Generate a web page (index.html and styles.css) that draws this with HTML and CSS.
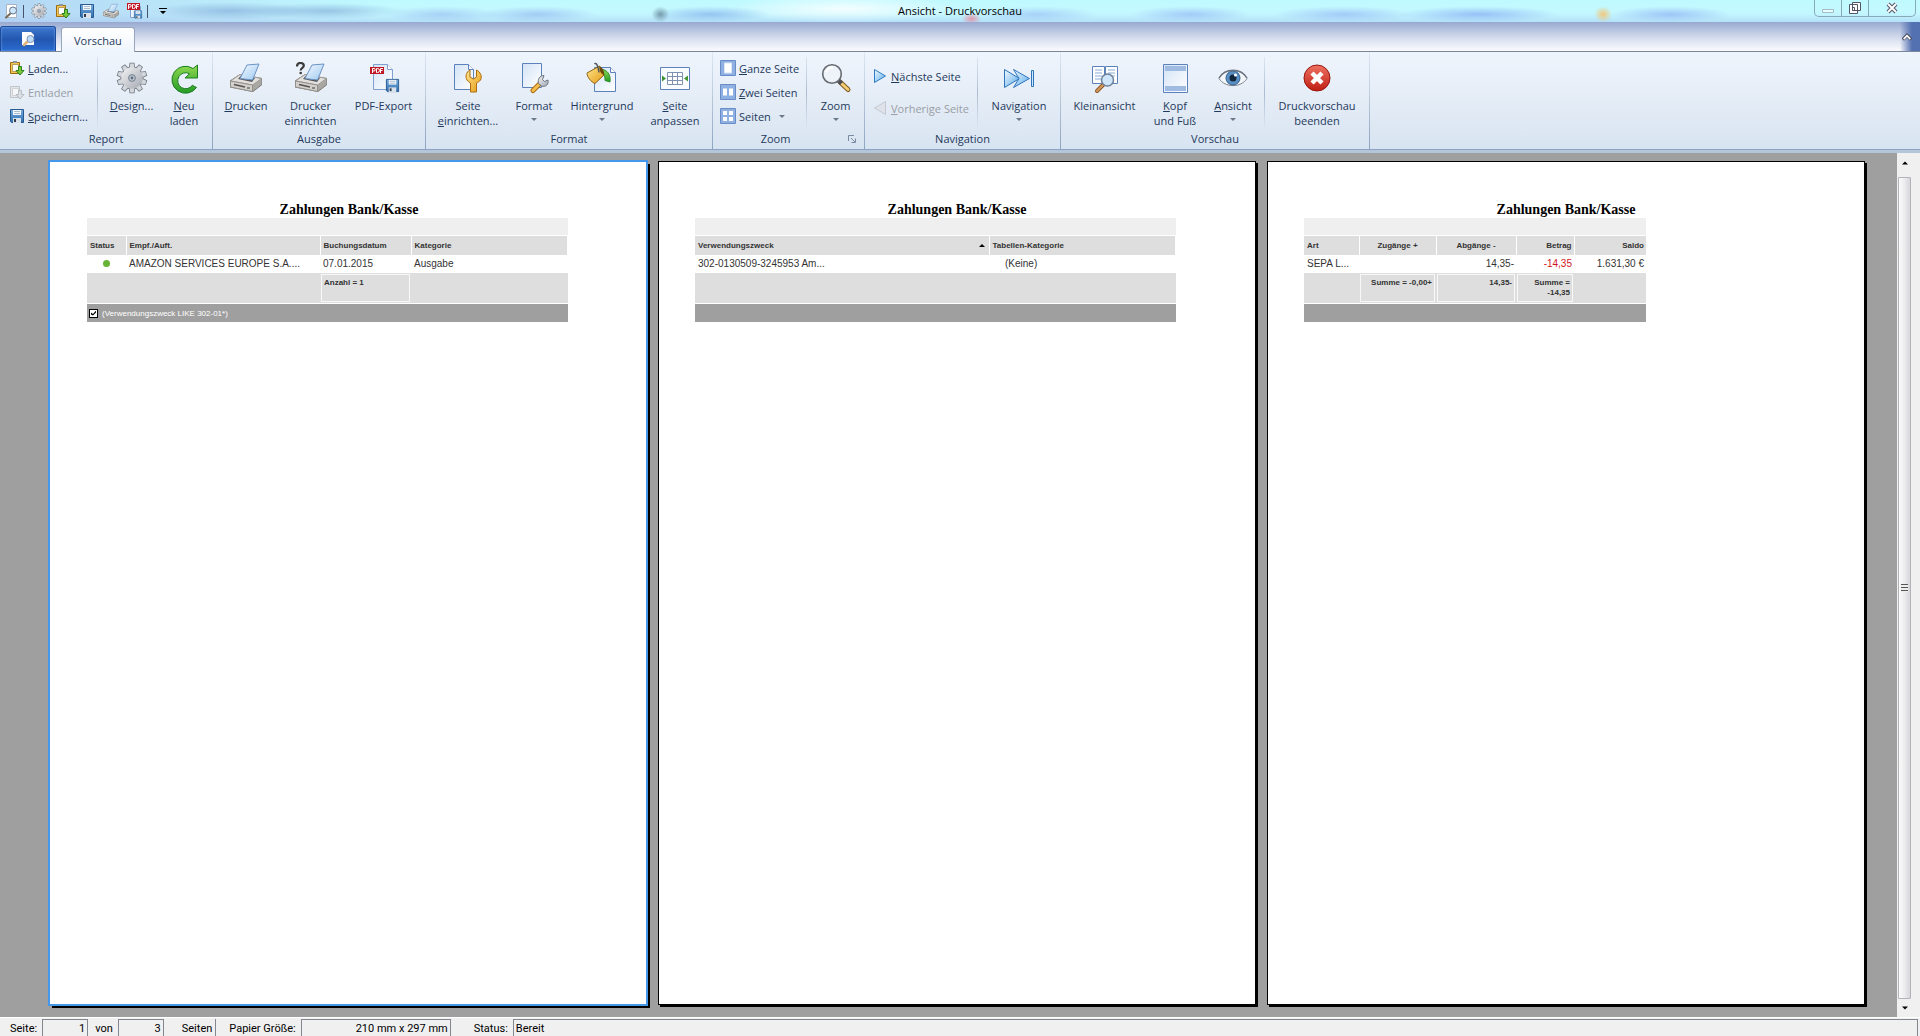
FILE: index.html
```
<!DOCTYPE html>
<html lang="de">
<head>
  <meta charset="UTF-8" />
  <meta name="viewport" content="width=device-width, initial-scale=1.0" />
  <title>Ansicht - Druckvorschau</title>
  <link rel="stylesheet" href="styles.css">
</head>
<body>
  <!-- icon sprite -->
  <svg class="sprite" aria-hidden="true">
    <defs>
      <linearGradient id="gSheet" x1="0" y1="0" x2="1" y2="1"><stop offset="0" stop-color="#d3e3f6"/><stop offset="1" stop-color="#ffffff"/></linearGradient>
      <linearGradient id="gPaper" x1="0" y1="0" x2="1" y2="1"><stop offset="0" stop-color="#f6fbff"/><stop offset="1" stop-color="#9cc8f0"/></linearGradient>
      <linearGradient id="gBlue" x1="0" y1="0" x2="1" y2="1"><stop offset="0" stop-color="#f2faff"/><stop offset="1" stop-color="#58a9e8"/></linearGradient>
      <linearGradient id="gDisk" x1="0" y1="0" x2="0" y2="1"><stop offset="0" stop-color="#77aee0"/><stop offset="1" stop-color="#2f6dac"/></linearGradient>
      <linearGradient id="gMetal" x1="0" y1="0" x2="1" y2="1"><stop offset="0" stop-color="#f2f3f5"/><stop offset="1" stop-color="#a3a8b0"/></linearGradient>
      <linearGradient id="gGold" x1="0" y1="0" x2="1" y2="1"><stop offset="0" stop-color="#ffe690"/><stop offset="1" stop-color="#e59a12"/></linearGradient>
      <linearGradient id="gGreen" x1="0" y1="0" x2="0" y2="1"><stop offset="0" stop-color="#8fd94f"/><stop offset="1" stop-color="#259a27"/></linearGradient>
      <linearGradient id="gRed" x1="0" y1="0" x2="0" y2="1"><stop offset="0" stop-color="#ee7262"/><stop offset="1" stop-color="#bf1d12"/></linearGradient>
      <path id="tooth" d="M13.500 7l.7-5.500h3.600l.7 5.500v18l-.7 5.500h-3.600l-.7-5.500z"/>
      <g id="teeth">
        <use href="#tooth"/>
        <use href="#tooth" transform="rotate(36 16 16)"/>
        <use href="#tooth" transform="rotate(72 16 16)"/>
        <use href="#tooth" transform="rotate(108 16 16)"/>
        <use href="#tooth" transform="rotate(144 16 16)"/>
      </g>
    </defs>
    <symbol id="i-preview" viewBox="0 0 16 16">
      <path d="M3.500 1.500h10v13h-10z" fill="#fff" stroke="#a9b4c4"/>
      <path d="M8 10l-5 4.500" stroke="#7b6a55" stroke-width="2" stroke-linecap="round"/>
      <circle cx="10" cy="7.500" r="3.500" fill="#cfe6fb" stroke="#68788e"/>
    </symbol>
    <symbol id="i-app" viewBox="0 0 16 16">
      <path d="M2 1h9l3 3v10H2z" fill="#fff"/>
      <path d="M8 10l-4 4" stroke="#dfb47c" stroke-width="2.500" stroke-linecap="round"/>
      <circle cx="10.500" cy="8" r="3.500" fill="#bcdcf9" stroke="#7d92b3"/>
    </symbol>
    <symbol id="i-gear" viewBox="0 0 32 32">
      <g fill="#70767f" stroke="#70767f" stroke-width="1.500"><use href="#teeth"/><circle cx="16" cy="16" r="10.700"/></g>
      <g fill="#d3d7dc"><use href="#teeth"/></g>
      <circle cx="16" cy="16" r="10.700" fill="url(#gMetal)"/>
      <circle cx="16" cy="16" r="3.400" fill="#bcc7d3" stroke="#747c86"/>
      <circle cx="16" cy="16" r="1.400" fill="#5f6d7d"/>
    </symbol>
    <symbol id="i-load" viewBox="0 0 16 16">
      <path d="M1.500 2.500h9v11h-9z" fill="#f4c84a" stroke="#9c6a12"/>
      <path d="M3.500 4.500h6v7h-6z" fill="#fff" stroke="#b89c58"/>
      <path d="M4 1h4v2H4z" fill="#8d949e"/>
      <path d="M9.500 6.500h3v4h2.500l-4 4.500-4-4.500h2.500z" fill="#79c83c" stroke="#2a7f1c"/>
    </symbol>
    <symbol id="i-unload" viewBox="0 0 16 16">
      <path d="M1.500 2.500h9v11h-9z" fill="#e4e6ea" stroke="#bfc3ca"/>
      <path d="M3.500 4.500h6v7h-6z" fill="#f6f7f9" stroke="#cfd2d7"/>
      <path d="M9.500 6.500h3v4h2.500l-4 4.500-4-4.500h2.500z" fill="#dcdfe3" stroke="#b7bbc2"/>
    </symbol>
    <symbol id="i-save" viewBox="0 0 16 16">
      <path d="M1.500 1.500h13v13h-12l-1-1z" fill="url(#gDisk)" stroke="#285a92"/>
      <path d="M4 2h8v5H4z" fill="#f4f8fc"/>
      <path d="M5 3.500h6M5 5.500h6" stroke="#a8bccf"/>
      <path d="M4 10h8v5H4z" fill="#d9e1ea"/>
      <path d="M5 11h2v3H5z" fill="#2d3a4a"/>
    </symbol>
    <symbol id="i-printer" viewBox="0 0 32 32">
      <path d="M0 19l10-6.500 22 4v6l-9 7L0 25z" fill="#a9a7a3" stroke="#7d7a75"/>
      <path d="M.5 19L10 12.500l21.500 4L22.500 23z" fill="#e3e1de" stroke="#a19e99"/>
      <path d="M8 17l3-3.500 14 2.500-3 4z" fill="#55565a"/>
      <path d="M10 16.500L17 3l12-1-6.500 16z" fill="url(#gPaper)" stroke="#6c93c4"/>
      <path d="M.5 19l22 4v6.500l-22-4.500z" fill="#d2d0cc" stroke="#928f8a"/>
      <path d="M4 22.500l11 2.500" stroke="#55524e" stroke-width="1.500"/>
      <path d="M17 26h3" stroke="#3c3c3c"/>
    </symbol>
    <symbol id="i-printer-setup" viewBox="0 0 32 32">
      <use href="#i-printer"/>
      <path d="M2 4.500C2 1.500 4 1 5.500 1s3.300.8 3.300 2.800C8.800 6 5.700 6 5.700 8.500" fill="none" stroke="#3c3c3c" stroke-width="2.200"/>
      <circle cx="5.700" cy="11" r="1.300" fill="#3c3c3c"/>
    </symbol>
    <symbol id="i-pdf" viewBox="0 0 32 32">
      <path d="M5.500 2.500h14l5 5v20h-19z" fill="url(#gSheet)" stroke="#7fa0d0"/>
      <path d="M19.500 2.500v5h5" fill="#fff" stroke="#7fa0d0"/>
      <path d="M2 5h14v7H2z" fill="#c01824"/>
      <path d="M4.500 11V6.500h1.500a1 1 0 0 1 0 2.500H4.500M8.500 6.500v4h1a2 2 0 0 0 0-4zM12.500 11V6.500H15M12.500 8.500h2" fill="none" stroke="#fff"/>
      <svg x="17" y="16" width="15" height="15"><use href="#i-save"/></svg>
    </symbol>
    <symbol id="i-pdf-small" viewBox="0 0 16 16">
      <path d="M3.500 3.500h10v11h-10z" fill="#eef5fc" stroke="#7fa0d0"/>
      <path d="M0 0h13v7H0z" fill="#c01824"/>
      <path d="M1.500 6V1.500h1.500a1 1 0 0 1 0 2.500H1.500M5.500 1.500v4h1a2 2 0 0 0 0-4zM9.500 6V1.500H12M9.500 3.500h2" fill="none" stroke="#fff"/>
      <svg x="6" y="7" width="10" height="9"><use href="#i-save"/></svg>
    </symbol>
    <symbol id="i-reload" viewBox="0 0 32 32">
      <path d="M25 6.500L29.500 3v13H17l4.500-4.300a8 8 0 1 0 2.800 11.600l4.200 2.200A13.500 13.500 0 1 1 25 6.500z" fill="url(#gGreen)" stroke="#1b7e22"/>
    </symbol>
    <symbol id="i-page-setup" viewBox="0 0 32 32">
      <path d="M2.500 2.500h14l5 5v20h-19z" fill="url(#gSheet)" stroke="#5c82bb"/>
      <path d="M16.500 2.500v5h5" fill="#fff" stroke="#5c82bb"/>
      <path d="M18 8c-4 2-5 7-3 10 1 1.500 2.500 2.500 3.500 3v9h6v-9c1-.5 3-1.500 4-3 2-3.500 0-8-4-10v7l-3 2-3.500-2z" fill="url(#gGold)" stroke="#ad6c0e"/>
    </symbol>
    <symbol id="i-format" viewBox="0 0 32 32">
      <path d="M4.500 1.500h19v24h-19z" fill="url(#gSheet)" stroke="#5c82bb"/>
      <path d="M15 28.500l8-8" stroke="#ad6c0e" stroke-width="5" stroke-linecap="round"/>
      <path d="M15 28.500l8-8" stroke="#f3bf4f" stroke-width="3" stroke-linecap="round"/>
      <path d="M20.500 21.500c-1-4 1-8 5.500-8l-1.500 4 2 2 3.500-1.500c1 4-2 7.500-6.500 6z" fill="url(#gMetal)" stroke="#6d7580"/>
    </symbol>
    <symbol id="i-bucket" viewBox="0 0 32 32">
      <path d="M8.500 5.500h16l5 5v19h-21z" fill="url(#gSheet)" stroke="#5c82bb"/>
      <path d="M24.500 5.500v5h5" fill="#fff" stroke="#5c82bb"/>
      <path d="M15 7c6 1 10 5 9 13l-5-1.500c0-5-1-8-4-8.500z" fill="url(#gGreen)" stroke="#2f8f2b"/>
      <path d="M1 11L13.500 4 18 13 9 21.500C5 20 1 15 1 11z" fill="url(#gGold)" stroke="#8d6410"/>
      <path d="M13.500 4c4 2.500 5 6 4.500 9-3-1-5-4-4.500-9z" fill="#6a4b0c"/>
      <path d="M8.500 2c2-2.500 4 4 4.500 8.500" fill="none" stroke="#50545b" stroke-width="1.500"/>
    </symbol>
    <symbol id="i-fit" viewBox="0 0 32 32">
      <path d="M1.500 5.500h29v22h-29z" fill="#f8fcff" stroke="#5c82bb"/>
      <path d="M8.500 10.500h15v12h-15zM8.500 14.500h15M8.500 18.500h15M13.500 10.500v12M18.500 10.500v12" fill="#fff" stroke="#7f93b0"/>
      <path d="M3 13.500l4 3-4 3zM29 13.500l-4 3 4 3z" fill="#3d9430"/>
    </symbol>
    <symbol id="i-one" viewBox="0 0 16 16">
      <path d="M.5.5h15v15H.5z" fill="#8fb0e2" stroke="#6a8dc8"/><path d="M4.500 3h7v10h-7z" fill="#fff" stroke="#dbe6f7"/>
    </symbol>
    <symbol id="i-two" viewBox="0 0 16 16">
      <path d="M.5.5h15v15H.5z" fill="#8fb0e2" stroke="#6a8dc8"/><path d="M3 4.500h4v7H3zM9 4.500h4v7H9z" fill="#fff"/>
    </symbol>
    <symbol id="i-four" viewBox="0 0 16 16">
      <path d="M.5.5h15v15H.5z" fill="#8fb0e2" stroke="#6a8dc8"/><path d="M3 3h4v4H3zM9 3h4v4H9zM3 9h4v4H3zM9 9h4v4H9z" fill="#fff"/>
    </symbol>
    <symbol id="i-zoom" viewBox="0 0 32 32">
      <path d="M20 20l8 7.500" stroke="#7a5a22" stroke-width="5" stroke-linecap="round"/>
      <path d="M21 21l7 6.500" stroke="#f4cd73" stroke-width="3" stroke-linecap="round"/>
      <path d="M18 18l3.500 3.500" stroke="#4c4f55" stroke-width="4"/>
      <circle cx="12" cy="12" r="9.300" fill="#edf3f8" stroke="#666b72" stroke-width="1.600"/>
      <path d="M6 10a7 7 0 0 1 7-4.500" fill="none" stroke="#fff" stroke-width="2"/>
    </symbol>
    <symbol id="i-next" viewBox="0 0 16 16"><path d="M2.500 1.500l11 6.500-11 6.500z" fill="url(#gBlue)" stroke="#2e7cc4"/></symbol>
    <symbol id="i-prev" viewBox="0 0 16 16"><path d="M13.500 1.500L2.500 8l11 6.500z" fill="#dfe3e9" stroke="#c4c9d1"/></symbol>
    <symbol id="i-nav" viewBox="0 0 32 32">
      <path d="M1.500 7.500l15 9-15 9z" fill="url(#gBlue)" stroke="#2e74bd"/>
      <path d="M10.500 7.500l16 9-16 9 5.500-9z" fill="url(#gBlue)" stroke="#2e74bd"/>
      <path d="M28.500 8.500h2v16h-2z" fill="#d0e8fb" stroke="#2e74bd"/>
    </symbol>
    <symbol id="i-thumbs" viewBox="0 0 32 32">
      <path d="M3.500 4.500h12v17h-12zM16.500 4.500h12v17h-12z" fill="#fff" stroke="#5c82bb"/>
      <path d="M6 8h7M6 11h7M6 14h7M6 17h6M19 8h7M19 11h7M19 14h7" stroke="#88a9d6"/>
      <path d="M14 23l-6 6" stroke="#8a5a2b" stroke-width="4" stroke-linecap="round"/>
      <path d="M14 23l-6 6" stroke="#d99a5c" stroke-width="2" stroke-linecap="round"/>
      <circle cx="18.500" cy="18" r="6" fill="#cfe6fa" stroke="#6e8199" stroke-width="1.500"/>
    </symbol>
    <symbol id="i-headfoot" viewBox="0 0 32 32">
      <path d="M4.500 2.500h24v28h-24z" fill="url(#gSheet)" stroke="#5c82bb"/>
      <path d="M6 4h21v5H6zM6 24h21v5H6z" fill="#9fbbe2"/>
    </symbol>
    <symbol id="i-eye" viewBox="0 0 32 32">
      <path d="M2 16.500C8 6 24 6 30 16.500 24 26 8 26 2 16.500z" fill="#f4f7fa" stroke="#7f8792"/>
      <circle cx="16" cy="16" r="7" fill="#5a8fc4" stroke="#33608f"/>
      <circle cx="16" cy="16" r="3.500" fill="#12263c"/>
      <circle cx="18.500" cy="13" r="1.600" fill="#fff"/>
      <path d="M2 16C8 5.500 24 5.500 30 16" fill="none" stroke="#6b7480" stroke-width="1.500"/>
    </symbol>
    <symbol id="i-close" viewBox="0 0 32 32">
      <circle cx="16" cy="16" r="13" fill="url(#gRed)" stroke="#98150d"/>
      <path d="M11 11l10 10M21 11L11 21" stroke="#fff" stroke-width="4.500"/>
    </symbol>
  </svg>

  <div class="window">
    <header class="titlebar">
      <div class="quick-access">
        <button class="qa" aria-label="Vorschau"><svg><use href="#i-preview"/></svg></button>
        <span class="qa-sep"></span>
        <button class="qa" aria-label="Design"><svg><use href="#i-gear"/></svg></button>
        <button class="qa" aria-label="Laden"><svg><use href="#i-load"/></svg></button>
        <button class="qa" aria-label="Speichern"><svg><use href="#i-save"/></svg></button>
        <button class="qa" aria-label="Drucken"><svg><use href="#i-printer"/></svg></button>
        <button class="qa" aria-label="PDF-Export"><svg><use href="#i-pdf-small"/></svg></button>
        <span class="qa-sep"></span>
        <button class="qa-more" aria-label="Anpassen"><svg viewBox="0 0 8 8"><path d="M0 1h8v1H0zM1 4h6L4 7z"/></svg></button>
      </div>
      <h1>Ansicht - Druckvorschau</h1>
      <div class="window-buttons">
        <button aria-label="Minimieren"><svg viewBox="0 0 14 12"><path d="M1.500 7.500h11v3h-11z" fill="#e6ffff" stroke="#a5bcc6"/></svg></button>
        <button aria-label="Wiederherstellen"><svg viewBox="0 0 14 12"><path d="M4.500.5h8v8h-8zM1.500 2.500h8v9h-8z" fill="#fff" stroke="#555566"/><path d="M4.500 5.500h2v3h-2z" fill="none" stroke="#555566"/></svg></button>
        <button class="wide" aria-label="Schließen"><svg viewBox="0 0 14 12"><path d="M3 2l8 8M11 2L3 10" stroke="#555566" stroke-width="4"/><path d="M3 2l8 8M11 2L3 10" stroke="#fff" stroke-width="2"/></svg></button>
      </div>
    </header>

    <nav class="tabs">
      <button class="app-button" aria-label="Datei"><svg><use href="#i-app"/></svg></button>
      <button class="tab">Vorschau</button>
      <button class="collapse" aria-label="Menüband minimieren"><svg viewBox="0 0 12 8"><path d="M1 7l5-5 5 5" fill="none" stroke="#4a4f5c" stroke-width="4"/><path d="M2 6.500l4-4 4 4" fill="none" stroke="#fff" stroke-width="2"/></svg></button>
    </nav>

    <div class="ribbon">
      <section class="group">
        <div class="group-body report">
          <div class="small-list">
            <button class="small"><svg><use href="#i-load"/></svg><span><u>L</u>aden...</span></button>
            <button class="small" disabled><svg><use href="#i-unload"/></svg><span>Entladen</span></button>
            <button class="small"><svg><use href="#i-save"/></svg><span><u>S</u>peichern...</span></button>
          </div>
          <button class="big"><svg><use href="#i-gear"/></svg><span><u>D</u>esign...</span></button>
          <button class="big"><svg><use href="#i-reload"/></svg><span><u>N</u>eu<br>laden</span></button>
        </div>
        <h2>Report</h2>
      </section>

      <section class="group">
        <div class="group-body output">
          <button class="big"><svg><use href="#i-printer"/></svg><span><u>D</u>rucken</span></button>
          <button class="big"><svg><use href="#i-printer-setup"/></svg><span>Drucker<br>einrichten</span></button>
          <button class="big"><svg><use href="#i-pdf"/></svg><span>PDF-Export</span></button>
        </div>
        <h2>Ausgabe</h2>
      </section>

      <section class="group">
        <div class="group-body format">
          <button class="big"><svg><use href="#i-page-setup"/></svg><span>Seite<br><u>e</u>inrichten...</span></button>
          <button class="big drop"><svg><use href="#i-format"/></svg><span>Format</span></button>
          <button class="big drop"><svg><use href="#i-bucket"/></svg><span>Hintergrund</span></button>
          <button class="big"><svg><use href="#i-fit"/></svg><span><u>S</u>eite<br>anpassen</span></button>
        </div>
        <h2>Format</h2>
      </section>

      <section class="group has-launcher">
        <div class="group-body zoom">
          <div class="small-list">
            <button class="small"><svg><use href="#i-one"/></svg><span><u>G</u>anze Seite</span></button>
            <button class="small"><svg><use href="#i-two"/></svg><span><u>Z</u>wei Seiten</span></button>
            <button class="small drop"><svg><use href="#i-four"/></svg><span>Seiten</span></button>
          </div>
          <button class="big drop"><svg><use href="#i-zoom"/></svg><span>Zoom</span></button>
        </div>
        <h2>Zoom</h2>
        <button class="launcher" aria-label="Zoom-Dialog"><svg viewBox="0 0 8 8"><path d="M.5 6V.5H6M3 3l4 4M7.500 3.500v4h-4" fill="none" stroke="#7b8ba0"/></svg></button>
      </section>

      <section class="group">
        <div class="group-body navigation">
          <div class="small-list two">
            <button class="small"><svg><use href="#i-next"/></svg><span><u>N</u>ächste Seite</span></button>
            <button class="small" disabled><svg><use href="#i-prev"/></svg><span><u>V</u>orherige Seite</span></button>
          </div>
          <button class="big drop"><svg><use href="#i-nav"/></svg><span>Navigation</span></button>
        </div>
        <h2>Navigation</h2>
      </section>

      <section class="group">
        <div class="group-body preview">
          <button class="big"><svg><use href="#i-thumbs"/></svg><span>Kleinansicht</span></button>
          <button class="big"><svg><use href="#i-headfoot"/></svg><span><u>K</u>opf<br>und Fuß</span></button>
          <button class="big drop divided"><svg><use href="#i-eye"/></svg><span><u>A</u>nsicht</span></button>
          <button class="big"><svg><use href="#i-close"/></svg><span>Druckvorschau<br>beenden</span></button>
        </div>
        <h2>Vorschau</h2>
      </section>
    </div>

    <div class="viewer">
      <main class="pages">
        <article class="page selected">
          <h3>Zahlungen Bank/Kasse</h3>
          <div class="report-grid">
            <div class="group-strip"></div>
            <table>
              <colgroup><col class="c-status"><col class="c-name"><col class="c-date"><col class="c-cat"><col></colgroup>
              <thead><tr><th>Status</th><th>Empf./Auft.</th><th>Buchungsdatum</th><th>Kategorie</th><th></th></tr></thead>
              <tbody><tr><td class="mid"><span class="dot"></span></td><td>AMAZON SERVICES EUROPE S.A....</td><td>07.01.2015</td><td>Ausgabe</td><td></td></tr></tbody>
              <tfoot><tr><td></td><td></td><td><div class="sum">Anzahl = 1</div></td><td></td><td></td></tr></tfoot>
            </table>
            <div class="filter-bar">
              <input type="checkbox" id="filter" checked>
              <label for="filter">(Verwendungszweck LIKE 302-01*)</label>
            </div>
          </div>
        </article>

        <article class="page">
          <h3>Zahlungen Bank/Kasse</h3>
          <div class="report-grid">
            <div class="group-strip"></div>
            <table>
              <colgroup><col class="c-purpose"><col class="c-table"><col></colgroup>
              <thead><tr><th class="sorted">Verwendungszweck</th><th>Tabellen-Kategorie</th><th></th></tr></thead>
              <tbody><tr><td>302-0130509-3245953 Am...</td><td class="indent">(Keine)</td><td></td></tr></tbody>
              <tfoot><tr><td></td><td></td><td></td></tr></tfoot>
            </table>
            <div class="filter-bar"></div>
          </div>
        </article>

        <article class="page">
          <h3>Zahlungen Bank/Kasse</h3>
          <div class="report-grid narrow">
            <div class="group-strip"></div>
            <table>
              <colgroup><col class="c-kind"><col class="c-in"><col class="c-out"><col class="c-amount"><col></colgroup>
              <thead><tr><th>Art</th><th class="mid">Zugänge +</th><th class="mid">Abgänge -</th><th class="num">Betrag</th><th class="num">Saldo</th></tr></thead>
              <tbody><tr><td>SEPA L...</td><td></td><td class="num">14,35-</td><td class="num minus">-14,35</td><td class="num">1.631,30 €</td></tr></tbody>
              <tfoot><tr><td></td><td><div class="sum">Summe = -0,00+</div></td><td><div class="sum">14,35-</div></td><td><div class="sum">Summe =<br>-14,35</div></td><td></td></tr></tfoot>
            </table>
            <div class="filter-bar"></div>
          </div>
        </article>
      </main>

      <div class="scrollbar">
        <button aria-label="Nach oben"><svg viewBox="0 0 8 8"><path d="M0 6l4-4 4 4z"/></svg></button>
        <div class="thumb"></div>
        <button aria-label="Nach unten"><svg viewBox="0 0 8 8"><path d="M0 2l4 4 4-4z"/></svg></button>
      </div>
    </div>

    <footer class="statusbar">
      <label for="page">Seite:</label>
      <input class="count" id="page" value="1" readonly>
      <label for="total">von</label>
      <input class="count" id="total" value="3" readonly>
      <span class="unit">Seiten</span>
      <label for="paper">Papier Größe:</label>
      <input class="paper" id="paper" value="210 mm x 297 mm" readonly>
      <label for="state">Status:</label>
      <input class="state" id="state" value="Bereit" readonly>
    </footer>
  </div>
</body>
</html>
```
FILE: styles.css
```
* {
  box-sizing: border-box;
}
body {
  margin: 0;
  font-family: "Open Sans", sans-serif;
  font-size: 11px;
  color: #1e395b;
}
h1, h2, h3 {
  margin: 0;
  font-size: inherit;
  font-weight: normal;
}
button {
  font: inherit;
  color: inherit;
  background: none;
  border: 0;
  padding: 0;
  margin: 0;
}
svg {
  display: block;
}
.sprite {
  position: absolute;
  width: 0;
  height: 0;
}
.window {
  display: flex;
  flex-direction: column;
  height: 100vh;
}

.titlebar {
  display: grid;
  grid-template-columns: 1fr auto 1fr;
  height: 22px;
  background:
    radial-gradient(ellipse 80px 9px at 12% 50%, rgba(110,150,205,.5), transparent),
    radial-gradient(ellipse 80px 8px at 17% 50%, rgba(110,150,205,.5), transparent),
    radial-gradient(ellipse 60px 8px at 23% 65%, rgba(150,185,240,.6), transparent),
    radial-gradient(ellipse 60px 8px at 28% 65%, rgba(150,185,240,.7), transparent),
    radial-gradient(ellipse 9px 8px at 34.4% 65%, rgba(90,120,140,.7), transparent),
    radial-gradient(ellipse 60px 8px at 37% 65%, rgba(130,175,235,.7), transparent),
    radial-gradient(ellipse 120px 14px at 44% 40%, rgba(255,255,255,.8), transparent),
    radial-gradient(ellipse 10px 6px at 50.6% 85%, rgba(240,120,140,.7), transparent),
    radial-gradient(ellipse 60px 8px at 54% 65%, rgba(150,185,245,.6), transparent),
    radial-gradient(ellipse 60px 8px at 62% 65%, rgba(150,185,245,.7), transparent),
    radial-gradient(ellipse 70px 8px at 70% 65%, rgba(150,185,245,.7), transparent),
    radial-gradient(ellipse 80px 8px at 77% 65%, rgba(140,180,245,.8), transparent),
    radial-gradient(ellipse 9px 8px at 83.5% 65%, rgba(245,195,110,.9), transparent),
    radial-gradient(ellipse 60px 8px at 87% 65%, rgba(150,185,245,.8), transparent),
    linear-gradient(to right, rgba(175,200,240,.7), transparent 20%),
    linear-gradient(#bffaff, #c4f8ff 60%, #b4e0f8);
}
.titlebar h1 {
  line-height: 21px;
  color: #000;
}
.quick-access {
  display: flex;
  align-items: center;
  gap: 8px;
  padding-left: 3px;
}
.qa svg {
  width: 16px;
  height: 16px;
}
.qa-sep {
  width: 1px;
  height: 13px;
  margin: 0 -1px 0 -4px;
  background: #45546b;
}
.qa-more {
  margin-left: 4px;
}
.qa-more svg {
  width: 8px;
  height: 8px;
}
.window-buttons {
  display: flex;
  justify-self: end;
  height: 17px;
  margin-right: 4px;
  border: 1px solid #86aab8;
  border-top: 0;
  border-radius: 0 0 5px 5px;
  overflow: hidden;
}
.window-buttons button {
  display: flex;
  align-items: center;
  justify-content: center;
  width: 27px;
  border-right: 1px solid #86aab8;
}
.window-buttons .wide {
  width: 46px;
  border-right: 0;
}
.window-buttons svg {
  width: 14px;
  height: 12px;
}

/* tab strip */
.tabs {
  display: flex;
  align-items: flex-end;
  height: 30px;
  border-bottom: 1px solid #7d879b;
  background:
    linear-gradient(to right, transparent calc(100% - 20px), #5370b0 calc(100% - 8px)),
    linear-gradient(#98a9d0, #b4c1de 25%, #dfe4f1 65%, #fafbfe);
}
.app-button {
  display: flex;
  align-items: center;
  justify-content: center;
  width: 56px;
  height: 25px;
  border: 1px solid #1c4a9c;
  border-bottom: 0;
  border-radius: 3px 3px 0 0;
  background: linear-gradient(#3f79cf, #2357b0 50%, #2a6bd0);
  box-shadow: inset 0 0 2px #8fc0ff;
}
.app-button svg {
  width: 16px;
  height: 16px;
}
.tab {
  height: 25px;
  margin: 0 auto -1px 5px;
  padding: 0 12px;
  border: 1px solid #98a6bf;
  border-bottom: 0;
  border-radius: 3px 3px 0 0;
  background: linear-gradient(#fff, #eff5fd);
}
.collapse {
  align-self: center;
  margin-right: 8px;
}
.collapse svg {
  width: 10px;
  height: 8px;
}

/* ribbon */
.ribbon {
  display: flex;
  flex: none;
  height: 101px;
  border-bottom: 3px solid #b5c5da;
  background: linear-gradient(#eff5fd, #e4ecf6 50%, #d7e4f1);
  box-shadow: inset 0 -1px #8ba3c0;
}
.group {
  position: relative;
  padding: 5px 0 1px;
  border-right: 1px solid;
  border-image: linear-gradient(#dfe8f3, #8ba3c0) 1;
}
.group h2 {
  line-height: 20px;
  text-align: center;
}
.has-launcher h2 {
  padding-right: 26px;
}
.group-body {
  display: grid;
  height: 72px;
}
.report {
  grid-template-columns: 98px 67px 38px;
  padding-right: 9px;
}
.output {
  grid-template-columns: 66px 63px 83px;
}
.format {
  grid-template-columns: 84px 48px 88px 58px;
  padding-right: 8px;
}
.zoom {
  grid-template-columns: 94px 57px;
}
.navigation {
  grid-template-columns: 113px 82px;
}
.preview {
  grid-template-columns: 87px 54px 63px 104px;
}
.big {
  display: flex;
  flex-direction: column;
  align-items: center;
  gap: 4px;
  padding-top: 5px;
  line-height: 15px;
  text-align: center;
  white-space: nowrap;
}
.big svg {
  width: 32px;
  height: 32px;
}
.small-list {
  display: grid;
  grid-template-rows: repeat(3, 24px);
  padding-left: 9px;
}
.small-list.two {
  grid-template-rows: repeat(2, 32px);
  padding: 4px 0 4px 7px;
}
.small-list, .divided {
  border-right: 1px solid;
  border-image: linear-gradient(#dfe8f3, #a9bbd2 50%, #dfe8f3) 1;
}
.small {
  display: flex;
  align-items: center;
  gap: 3px;
  padding-bottom: 2px;
  white-space: nowrap;
}
.small svg {
  width: 16px;
  height: 16px;
}
.small:disabled {
  color: #9a9ea5;
}
.zoom .small-list {
  padding-left: 7px;
}
.drop::after {
  content: "";
  border: 3px solid transparent;
  border-top-color: #6c7787;
  border-bottom: 0;
}
.big.drop::after {
  margin-top: 1px;
}
.small.drop::after {
  margin-left: 5px;
}
.launcher {
  position: absolute;
  right: 8px;
  bottom: 7px;
}
.launcher svg {
  width: 8px;
  height: 8px;
}
u {
  text-decoration-thickness: 1px;
  text-decoration-skip-ink: none;
  text-underline-offset: 1px;
}

/* page area */
.viewer {
  display: flex;
  flex: 1;
  min-height: 0;
  background: #9f9f9f;
}
.pages {
  display: flex;
  flex: 1;
  align-items: flex-start;
  gap: 11px;
  padding: 8px 32px 0 49px;
  overflow: hidden;
}
.page {
  flex: 1;
  aspect-ratio: 598 / 844;
  padding: 38px 36px 0;
  border: 1px solid #000;
  background: #fff;
  box-shadow: 2px 2px #000;
}
.page.selected {
  padding: 38px 35px 0 37px;
  border-color: #4597ea;
  outline: 1px solid #4597ea;
  box-shadow: 3px 3px #000;
}
.page h3 {
  height: 18px;
  font: bold 14px/19px "Liberation Serif", serif;
  color: #000;
  text-align: center;
}
.report-grid {
  max-width: 481px;
  font-family: "Liberation Sans", sans-serif;
  color: #333;
}
.report-grid.narrow {
  max-width: 342px;
}
.group-strip {
  height: 17px;
  background: #efefef;
}
table {
  width: 100%;
  table-layout: fixed;
  border-collapse: collapse;
}
th, td {
  padding: 0 3px;
  text-align: left;
  white-space: nowrap;
  overflow: hidden;
}
th {
  height: 19px;
  font-size: 8px;
  border-right: 1px solid #fff;
  border-top: 1px solid #fff;
  background: #dedede;
}
th:last-child {
  border-right: 0;
}
tbody td {
  height: 18px;
  font-size: 10px;
}
tfoot td {
  height: 31px;
  padding: 1px;
  background: #dedede;
  border-bottom: 1px solid #fff;
}
th.mid, td.mid {
  text-align: center;
}
th.num, td.num {
  padding-right: 2px;
  text-align: right;
}
.sum {
  height: 28px;
  padding: 3px 2px;
  border: 1px solid #f8f8f8;
  font-size: 8px;
  font-weight: bold;
  line-height: 10px;
}
.narrow .sum {
  text-align: right;
}
.minus {
  color: #d4141c;
}
td.indent {
  padding-left: 16px;
}
.dot {
  display: inline-block;
  width: 7px;
  height: 7px;
  border-radius: 50%;
  background: #67b336;
}
.sorted::after {
  content: "";
  float: right;
  margin: 3px 1px 0 0;
  border: 3px solid transparent;
  border-top: 0;
  border-bottom-color: #000;
}
.c-status { width: 39px; }
.c-name { width: 194px; }
.c-date { width: 91px; }
.c-cat { width: 156px; }
.c-purpose { width: 294px; }
.c-table { width: 186px; }
.c-kind { width: 55px; }
.c-in { width: 77px; }
.c-out { width: 80px; }
.c-amount { width: 58px; }
.filter-bar {
  display: flex;
  align-items: center;
  gap: 4px;
  height: 18px;
  padding-left: 2px;
  background: #9f9f9f;
  color: #fff;
  font-size: 8px;
}
.filter-bar input {
  appearance: none;
  width: 9px;
  height: 9px;
  margin: 0;
  border: 1px solid #000;
  background: #fff;
}
.filter-bar input:checked::after {
  content: "";
  display: block;
  width: 5px;
  height: 5px;
  margin: 1px;
  background: #000;
  clip-path: polygon(0 40%, 40% 70%, 100% 0, 100% 40%, 40% 100%, 0 80%);
}

/* vertical scrollbar */
.scrollbar {
  display: flex;
  flex-direction: column;
  width: 23px;
  padding: 0 9px 0 1px;
  background: #f0f0f0;
}
.scrollbar button {
  display: flex;
  align-items: center;
  justify-content: center;
  height: 18px;
}
.scrollbar button:first-child {
  height: 24px;
  padding-bottom: 4px;
}
.scrollbar svg {
  width: 6px;
  height: 6px;
}
.thumb {
  flex: 1;
  display: flex;
  align-items: center;
  justify-content: center;
  border: 1px solid #b4b4b8;
  border-radius: 1px;
  background: linear-gradient(to right, #fafafa, #ececee 50%, #d6d6dc);
}
.thumb::before {
  content: "";
  width: 7px;
  height: 8px;
  background: repeating-linear-gradient(#555 0 1px, #eee 1px 3px);
}

/* status bar */
.statusbar {
  display: flex;
  align-items: stretch;
  flex: none;
  height: 19px;
  padding: 1px 2px 0 10px;
  border-top: 1px solid #fff;
  background: #f0f0f0;
  color: #000;
  font-family: Roboto, sans-serif;
  line-height: 20px;
}
.statusbar label {
  margin-right: 5px;
}
.statusbar input {
  min-width: 0;
  height: 19px;
  padding: 0 2px;
  border: 1px solid #828790;
  border-bottom: 0;
  background: transparent;
  font: inherit;
  color: inherit;
  text-align: right;
}
.statusbar .count {
  width: 46px;
  margin-right: 7px;
}
.statusbar .unit {
  margin: 0 13px 0 11px;
  padding-right: 3px;
  border-right: 1px solid #828790;
}
.statusbar .paper {
  width: 150px;
  margin-right: 23px;
}
.statusbar .state {
  flex: 1;
  text-align: left;
}
```
